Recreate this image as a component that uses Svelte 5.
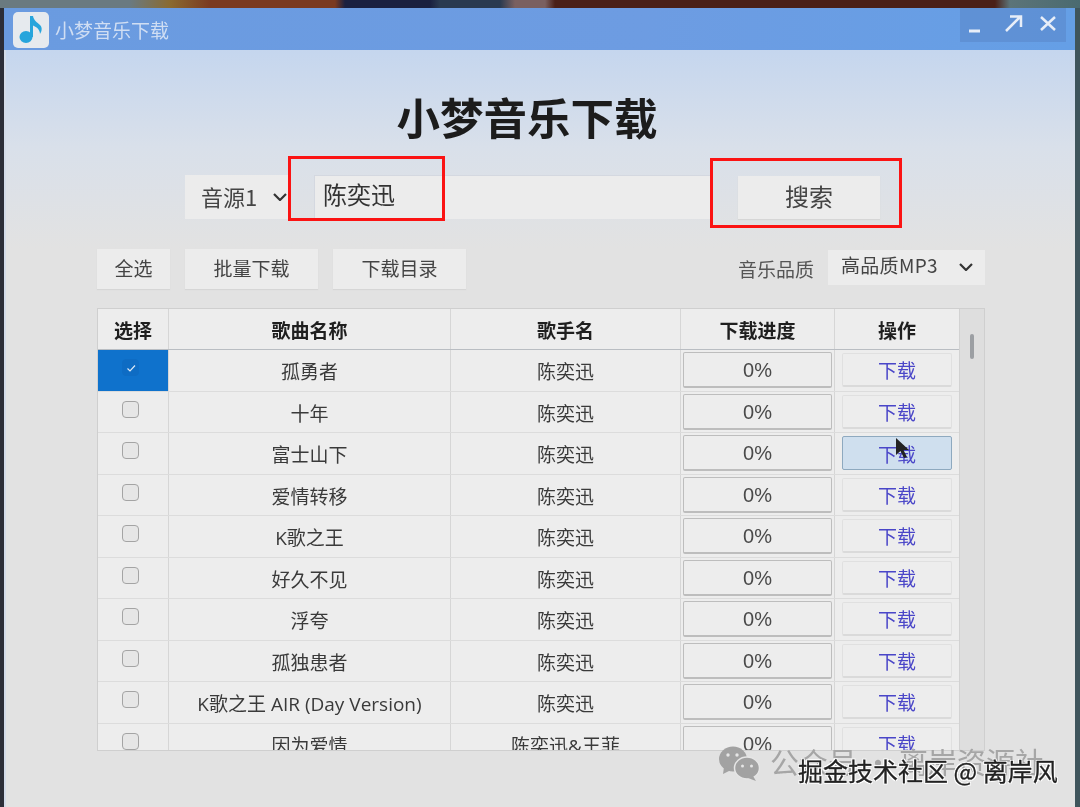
<script>
  const SONGS = [
    { name: '孤勇者', artist: '陈奕迅', checked: true },
    { name: '十年', artist: '陈奕迅' },
    { name: '富士山下', artist: '陈奕迅', hover: true },
    { name: '爱情转移', artist: '陈奕迅' },
    { name: 'K歌之王', artist: '陈奕迅' },
    { name: '好久不见', artist: '陈奕迅' },
    { name: '浮夸', artist: '陈奕迅' },
    { name: '孤独患者', artist: '陈奕迅' },
    { name: 'K歌之王 AIR (Day Version)', artist: '陈奕迅' },
    { name: '因为爱情', artist: '陈奕迅&王菲' },
  ];
</script>

<div class="desktop">
  <div class="window">
    <header class="titlebar">
      <div class="app-icon">
        <svg viewBox="0 0 36 36" width="36" height="36" aria-hidden="true">
          <ellipse cx="13" cy="25" rx="6.500" ry="6" fill="#27a5dc" />
          <path d="M17 25 L17 4 L20 4 C21 9 24 10 27 13 C29.500 15.500 29 19 27 22 C27 18 24 15 20 13.500 L20 25 Z" fill="#27a5dc" />
        </svg>
      </div>
      <span class="app-title">小梦音乐下载</span>
      <div class="win-controls">
        <svg viewBox="0 0 106 34" width="106" height="34" aria-hidden="true">
          <path d="M9 23 H20" stroke="#e8eef8" stroke-width="3" fill="none" />
          <path d="M46 23 L60 9 M50 8.500 H61 V19" stroke="#e8eef8" stroke-width="2.500" fill="none" />
          <path d="M81 9 L95 22 M95 9 L81 22" stroke="#e8eef8" stroke-width="2.500" fill="none" />
        </svg>
      </div>
    </header>

    <main class="content">
      <h1>小梦音乐下载</h1>

      <div class="search-row">
        <div class="combo source"><span>音源1</span><svg class="chev" viewBox="0 0 14 8" width="14" height="8"><path d="M1 1 L7 7 L13 1" /></svg></div>
        <div class="search-input">陈奕迅</div>
        <div class="btn search-btn">搜索</div>
      </div>

      <div class="toolbar">
        <div class="btn tool all">全选</div>
        <div class="btn tool batch">批量下载</div>
        <div class="btn tool dir">下载目录</div>
        <span class="quality-label">音乐品质</span>
        <div class="combo quality"><span>高品质MP3</span><svg class="chev" viewBox="0 0 14 8" width="14" height="8"><path d="M1 1 L7 7 L13 1" /></svg></div>
      </div>

      <div class="table">
        <div class="table-main">
          <div class="row head">
            <div class="cell">选择</div>
            <div class="cell">歌曲名称</div>
            <div class="cell">歌手名</div>
            <div class="cell">下载进度</div>
            <div class="cell">操作</div>
          </div>
          {#each SONGS as song (song.name)}
            <div class="row">
              <div class="cell" class:selected={song.checked}>
                <span class="check" class:on={song.checked}>
                  {#if song.checked}
                    <svg viewBox="0 0 12 12" width="12" height="12"><path d="M2.500 6.500 L5 9 L10 3.500" fill="none" stroke="#dce9f7" stroke-width="1.200" /></svg>
                  {/if}
                </span>
              </div>
              <div class="cell">{song.name}</div>
              <div class="cell">{song.artist}</div>
              <div class="cell"><div class="progress">0%</div></div>
              <div class="cell"><div class="dl" class:hover={song.hover}>下载</div></div>
            </div>
          {/each}
        </div>
        <div class="scrollbar"><div class="thumb"></div></div>
      </div>
    </main>

    <div class="cursor">
      <svg viewBox="0 0 16 24" width="16" height="24" aria-hidden="true"><path d="M1 1 L1 18 L5.500 14 L9 21 L12 20 L8.500 13 L14 13 Z" fill="#222" /></svg>
    </div>

    <div class="mark box-a"></div>
    <div class="mark box-b"></div>

    <div class="watermark">
      <svg viewBox="0 0 42 38" width="42" height="38" aria-hidden="true">
        <ellipse cx="15" cy="14" rx="14" ry="12.500" fill="#a2a2a2" />
        <path d="M6 22 L5 29 L13 25 Z" fill="#a2a2a2" />
        <ellipse cx="29" cy="23" rx="12.500" ry="11" fill="#a2a2a2" stroke="#e6e6e6" stroke-width="1.500" />
        <path d="M35 31 L38 36 L30 33 Z" fill="#a2a2a2" />
        <circle cx="10" cy="10" r="1.700" fill="#e6e6e6" />
        <circle cx="19" cy="10" r="1.700" fill="#e6e6e6" />
        <circle cx="24.500" cy="21" r="1.500" fill="#e6e6e6" />
        <circle cx="33.500" cy="21" r="1.500" fill="#e6e6e6" />
      </svg>
      <span class="wm-gray">公众号 · 离岸资源社</span>
      <span class="wm-black">掘金技术社区 @ 离岸风</span>
    </div>
  </div>
</div>

<style>
  :global(body) {
    margin: 0;
    overflow: hidden;
  }
  .desktop {
    height: 807px;
    padding: 8px 5px 0 4px;
    box-sizing: border-box;
    background:
      linear-gradient(90deg, #6a7a80 0, #6a7a80 130px, #8a6a30 170px, #7a3a20 210px, #7a3a20 335px, #1a2040 345px, #1a2040 430px, #2a3a50 440px, #2a3a50 500px, #7a6060 515px, #7a6060 545px, #4a2018 555px, #4a2018 995px, #5c7478 1010px, #4a6a70 1080px) top / 100% 8px no-repeat,
      linear-gradient(90deg, #2c2e38 0, #2c2e38 4px, #3f555c 1075px);
    font-family: "Noto Sans CJK SC", "Liberation Sans", sans-serif;
    color: #333;
  }
  .window {
    position: relative;
    height: 799px;
    background: linear-gradient(180deg, #c5d6ee 42px, #d9e0ea 140px, #e2e2e2 240px);
    box-shadow: inset 2px 0 0 #d3dbe8;
    filter: blur(0.35px);
    overflow: hidden;
  }
  .titlebar {
    height: 42px;
    display: flex;
    align-items: center;
    padding-left: 9px;
    background: linear-gradient(90deg, #6a9be0, #6d9ce2 60%, #659fe6);
    box-sizing: border-box;
  }
  .app-icon {
    width: 36px;
    height: 36px;
    border-radius: 5px;
    background: #e6eaee;
    margin-top: 2px;
  }
  .app-title {
    margin-left: 6px;
    font-size: 19px;
    color: #d0def3;
  }
  .win-controls {
    margin-left: auto;
    margin-right: 9px;
    margin-top: -8px;
    height: 34px;
    background: rgba(86, 126, 190, 0.4);
  }
  .content {
    display: flex;
    flex-direction: column;
  }
  h1 {
    margin: 36px 0 0 0;
    padding-right: 25px;
    text-align: center;
    font-size: 43.500px;
    line-height: 62px;
    font-weight: 700;
    color: #1c1c1c;
  }
  .search-row {
    display: flex;
    align-items: center;
    height: 44px;
    margin-top: 27px;
    padding-left: 181px;
  }
  .combo {
    display: flex;
    align-items: center;
    background: #ececec;
    color: #444;
    box-sizing: border-box;
  }
  .chev {
    fill: none;
    stroke: #333;
    stroke-width: 2.200;
  }
  .source {
    width: 103px;
    height: 44px;
    padding-left: 16px;
    padding-bottom: 3px;
    font-size: 22px;
  }
  .source .chev {
    margin-left: 16px;
    margin-top: 3px;
  }
  .search-input {
    margin-left: 26px;
    width: 396px;
    height: 44px;
    line-height: 36px;
    box-sizing: border-box;
    padding-left: 8px;
    background: #ececec;
    border-top: 1px solid #d4d8e0;
    border-left: 1px solid #d4d8e0;
    font-size: 24px;
    color: #333;
  }
  .btn {
    display: flex;
    align-items: center;
    justify-content: center;
    background: #ececec;
    box-shadow: 0 1px 1px #d6d6d6;
    color: #444;
    box-sizing: border-box;
  }
  .search-btn {
    margin-left: 28px;
    width: 142px;
    height: 43px;
    padding-bottom: 3px;
    font-size: 24px;
  }
  .toolbar {
    display: flex;
    align-items: center;
    height: 41px;
    margin-top: 29px;
    padding-left: 93px;
    padding-right: 90px;
  }
  .tool {
    height: 40px;
    padding-bottom: 2px;
    font-size: 19px;
  }
  .all {
    width: 73px;
  }
  .batch {
    width: 133px;
    margin-left: 15px;
  }
  .dir {
    width: 133px;
    margin-left: 15px;
  }
  .quality-label {
    margin-left: auto;
    font-size: 19px;
    color: #555;
  }
  .quality {
    width: 157px;
    height: 35px;
    margin-left: 14px;
    margin-top: -3px;
    padding-left: 13px;
    font-size: 19px;
    white-space: nowrap;
  }
  .quality span {
    line-height: 28px;
    margin-top: -5px;
    letter-spacing: 0.300px;
  }
  .quality .chev {
    margin-left: 21px;
  }
  .table {
    display: flex;
    height: 443px;
    width: 888px;
    margin: 19px 0 0 93px;
    border: 1px solid #cfcfcf;
    box-sizing: border-box;
    overflow: hidden;
    background: #ededed;
  }
  .table-main {
    width: 861px;
    flex: none;
  }
  .row {
    display: grid;
    grid-template-columns: 71px 282px 230px 154px 124px;
    height: 41.5px;
    border-bottom: 1px solid #dcdcdc;
    box-sizing: border-box;
    font-family: "Open Sans", "Noto Sans CJK SC", sans-serif;
    font-size: 19px;
    color: #3a3a3a;
  }
  .row.head {
    height: 41px;
    border-bottom: 1px solid #b9bdc2;
    font-weight: 700;
    color: #1f1f1f;
  }
  .cell {
    display: flex;
    align-items: center;
    justify-content: center;
    border-right: 1px solid #d6d6d6;
    white-space: nowrap;
    box-sizing: border-box;
    padding-top: 2px;
  }
  .row:not(.head) .cell:nth-child(4),
  .row:not(.head) .cell:nth-child(5) {
    padding: 0;
  }
  .row:not(.head) .cell:nth-child(5) {
    border-right: 0;
  }
  .head .cell:nth-child(5) {
    border-right: 0;
  }
  .row:not(.head) .cell:first-child {
    padding: 0 5px 5px 0;
  }
  .cell.selected {
    background: #0f72cc;
  }
  .check {
    display: flex;
    align-items: center;
    justify-content: center;
    width: 15px;
    height: 15px;
    border: 1.500px solid #a4a4a4;
    border-radius: 4px;
    background: #e6e6e6;
  }
  .check.on {
    background: #0e6cc4;
    border-color: #0e6cc4;
  }
  .progress {
    width: 149px;
    height: 36px;
    display: flex;
    align-items: center;
    justify-content: center;
    padding-top: 2px;
    background: #ededed;
    border: 1px solid #bdbdbd;
    border-bottom: 2px solid #bdbdbd;
    border-radius: 2px;
    box-sizing: border-box;
    font-family: "Liberation Sans", sans-serif;
    font-size: 20px;
    color: #4a4a4a;
  }
  .dl {
    width: 110px;
    height: 34px;
    display: flex;
    align-items: center;
    justify-content: center;
    padding-top: 1px;
    border: 1px solid #e0e0e0;
    border-bottom: 2px solid #dadada;
    border-radius: 2px;
    box-sizing: border-box;
    font-size: 19px;
    color: #4a46c8;
  }
  .dl.hover {
    background: #cfdfee;
    border: 1px solid #8ea9bf;
  }
  .scrollbar {
    width: 26px;
    flex: none;
    background: #dedede;
    border-left: 1px solid #d2d2d2;
    box-sizing: border-box;
  }
  .thumb {
    width: 4px;
    height: 25px;
    margin: 25px 0 0 10px;
    background: #9c9fa3;
    border-radius: 2px;
  }
  .cursor {
    position: absolute;
    left: 891px;
    top: 429px;
    line-height: 0;
  }
  .mark {
    position: absolute;
    border: 3px solid #fb1313;
    box-sizing: border-box;
  }
  .box-a {
    left: 284px;
    top: 148px;
    width: 157px;
    height: 65px;
  }
  .box-b {
    left: 706px;
    top: 150px;
    width: 192px;
    height: 70px;
  }
  .watermark {
    position: absolute;
    left: 714px;
    top: 737px;
    width: 350px;
    height: 50px;
  }
  .watermark svg {
    position: absolute;
    left: 0;
    top: 0;
  }
  .wm-gray {
    position: absolute;
    left: 52px;
    top: -2px;
    font-size: 29px;
    line-height: 36px;
    color: #a6a6a6;
    white-space: nowrap;
  }
  .wm-black {
    position: absolute;
    left: 80px;
    top: 8px;
    font-size: 25px;
    line-height: 34px;
    color: #222;
    white-space: nowrap;
    -webkit-text-stroke: 0.300px #222;
    text-shadow: 1px 1px 0 #fff, -1px -1px 0 #fff, 1px -1px 0 #fff, -1px 1px 0 #fff;
  }
</style>
